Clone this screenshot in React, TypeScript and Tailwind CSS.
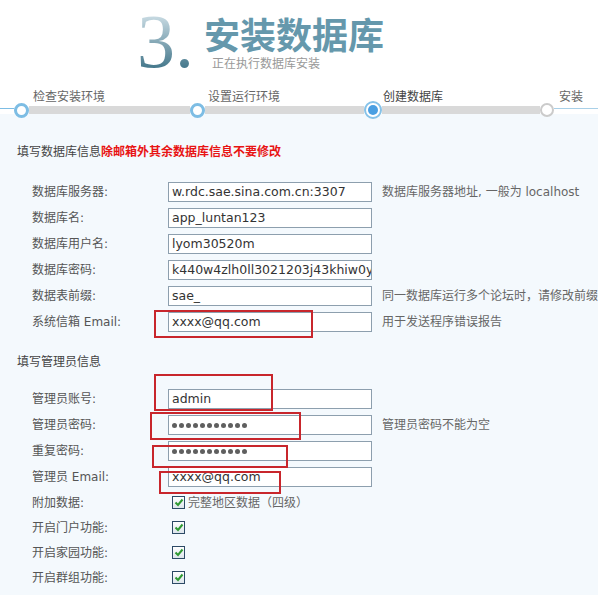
import React from 'react';

type Field = { label: string; value?: string; help?: string; password?: boolean };

const dbFields: Field[] = [
  { label: '数据库服务器:', value: 'w.rdc.sae.sina.com.cn:3307', help: '数据库服务器地址, 一般为 localhost' },
  { label: '数据库名:', value: 'app_luntan123' },
  { label: '数据库用户名:', value: 'lyom30520m' },
  { label: '数据库密码:', value: 'k440w4zlh0ll3021203j43khiw0y' },
  { label: '数据表前缀:', value: 'sae_', help: '同一数据库运行多个论坛时，请修改前缀' },
  { label: '系统信箱 Email:', value: 'xxxx@qq.com', help: '用于发送程序错误报告' },
];

const adminFields: Field[] = [
  { label: '管理员账号:', value: 'admin' },
  { label: '管理员密码:', password: true, help: '管理员密码不能为空' },
  { label: '重复密码:', password: true },
  { label: '管理员 Email:', value: 'xxxx@qq.com' },
];

const options = [
  { label: '附加数据:', text: '完整地区数据（四级）' },
  { label: '开启门户功能:' },
  { label: '开启家园功能:' },
  { label: '开启群组功能:' },
];

// red annotation boxes drawn over the form
const marks = [
  'left-[154px] top-[310px] w-[159px] h-[28px]',
  'left-[154px] top-[374px] w-[119px] h-[37px]',
  'left-[150px] top-[412px] w-[151px] h-[28px]',
  'left-[152px] top-[445px] w-[136px] h-[23px]',
  'left-[159px] top-[471px] w-[122px] h-[23px]',
];

function TextBox({ value, password }: { value?: string; password?: boolean }) {
  return (
    <div className="w-[204px] h-[20px] shrink-0 border border-[#8d9fae] bg-white pl-[3px] flex items-center overflow-hidden whitespace-nowrap text-[12.5px] text-[#333]">
      {password ? (
        <div className="flex gap-[2px]">
          {Array.from({ length: 11 }).map((_, i) => (
            <span key={i} className="w-[5px] h-[5px] rounded-full bg-[#5f5f5f]" />
          ))}
        </div>
      ) : (
        value
      )}
    </div>
  );
}

function Checkbox() {
  return (
    <span className="w-[13px] h-[13px] shrink-0 border border-[#2c4a66] bg-linear-to-b from-white to-[#dde5ec] flex items-center justify-center">
      <svg width="10" height="9" viewBox="0 0 10 9">
        <path d="M1.5 4.5 L4 7 L8.5 1.5" fill="none" stroke="#2f9a33" strokeWidth="2" />
      </svg>
    </span>
  );
}

function FormRow({ field }: { field: Field }) {
  return (
    <div className="flex items-center h-[26px]">
      <div className="w-[168px] pl-[32px] shrink-0 whitespace-nowrap">{field.label}</div>
      <TextBox value={field.value} password={field.password} />
      {field.help && <div className="ml-[10px] whitespace-nowrap text-[#666]">{field.help}</div>}
    </div>
  );
}

function Step({ kind }: { kind: 'done' | 'current' | 'todo' }) {
  if (kind === 'current') {
    return (
      <div className="w-[18px] h-[18px] shrink-0 rounded-full border-2 border-[#86c2e8] bg-white p-[2px]">
        <div className="w-full h-full rounded-full bg-[#4a9fe2]" />
      </div>
    );
  }
  if (kind === 'todo') {
    return <div className="w-[14px] h-[14px] shrink-0 rounded-full border-2 border-[#cbcbcb] bg-white" />;
  }
  return <div className="w-[15px] h-[15px] shrink-0 rounded-full border-[3px] border-[#7dbde4] bg-white" />;
}

export default function App() {
  return (
    <div className="relative w-[598px] h-[595px] overflow-hidden bg-[#f4f9fd] text-[12px] text-[#555] font-['DejaVu_Sans','Noto_Sans_CJK_SC',sans-serif]">
      {/* Header */}
      <header className="h-[114px] bg-white">
        <div className="flex h-[91px]">
          <div className="pl-[137px] pt-[3px]">
            <span className="font-['Liberation_Serif',serif] text-[76px] leading-none bg-linear-to-b from-[#d3e3ea] from-15% to-[#3f7488] to-85% bg-clip-text text-transparent">
              3.
            </span>
          </div>
          <div className="ml-[10px] pt-[15px]">
            <h1 className="text-[36px] leading-none font-bold text-[#6598ac] font-['Noto_Sans_CJK_SC',sans-serif]">安装数据库</h1>
            <p className="ml-[8px] mt-[7px] text-[12px] leading-none text-[#999]">正在执行数据库安装</p>
          </div>
        </div>

        {/* Progress steps */}
        <div className="flex h-[10px] pl-[33px] text-[#666] leading-none whitespace-nowrap">
          <span className="w-[175px]">检查安装环境</span>
          <span className="w-[175px]">设置运行环境</span>
          <span className="w-[176px] text-[#444]">创建数据库</span>
          <span>安装</span>
        </div>
        <div className="relative z-10 flex items-center h-[18px]">
          <div className="w-[14px] h-px self-start mt-[7px] bg-[#7dbde4]" />
          <Step kind="done" />
          <div className="w-[161px] h-[8px] bg-[#d9d9d9]" />
          <Step kind="done" />
          <div className="w-[159px] h-[8px] bg-[#d9d9d9]" />
          <Step kind="current" />
          <div className="w-[158px] h-[8px] bg-[#d9d9d9]" />
          <Step kind="todo" />
          <div className="flex-1 h-px self-start mt-[7px] bg-[#a9d0e8]" />
        </div>
      </header>

      {/* Database section */}
      <section className="pt-[28px]">
        <h2 className="pl-[17px] h-[20px] leading-[20px] text-[#444] whitespace-nowrap">
          填写数据库信息<span className="font-bold text-[#e81414]">除邮箱外其余数据库信息不要修改</span>
        </h2>
        <div className="mt-[17px]">
          {dbFields.map((f) => (
            <FormRow key={f.label} field={f} />
          ))}
        </div>
      </section>

      {/* Admin section */}
      <section className="mt-[17px]">
        <h2 className="pl-[17px] h-[20px] leading-[20px] text-[#444]">填写管理员信息</h2>
        <div className="mt-[14px]">
          {adminFields.map((f) => (
            <FormRow key={f.label} field={f} />
          ))}
          {options.map((o) => (
            <div key={o.label} className="flex items-center h-[25px]">
              <div className="w-[168px] pl-[32px] shrink-0">{o.label}</div>
              <div className="ml-[4px] flex items-center gap-[3px]">
                <Checkbox />
                {o.text && <span className="text-[#666]">{o.text}</span>}
              </div>
            </div>
          ))}
        </div>
      </section>

      {marks.map((m) => (
        <div key={m} className={`absolute pointer-events-none border-2 border-[#c8262c] ${m}`} />
      ))}
    </div>
  );
}
